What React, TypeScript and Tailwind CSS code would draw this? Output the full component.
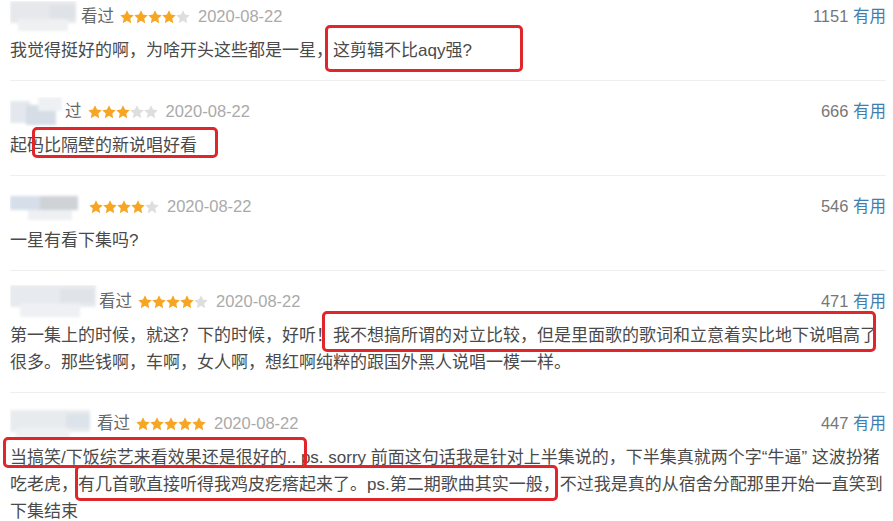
import React from "react";

type Block = [number, number, number, number, string];

type Review = {
  mask: { w: number; h: number; blocks: Block[] };
  watched?: string;
  stars: number;
  date: string;
  votes: string;
  text: string;
};

const reviews: Review[] = [
  {
    mask: {
      w: 70,
      h: 32,
      blocks: [
        [0, 0, 66, 22, "#e6e8eb"],
        [8, 18, 50, 12, "#eef0f2"],
        [40, 4, 26, 14, "#dfe2e6"],
      ],
    },
    watched: "看过",
    stars: 4,
    date: "2020-08-22",
    votes: "1151",
    text: "我觉得挺好的啊，为啥开头这些都是一星，这剪辑不比aqy强?",
  },
  {
    mask: {
      w: 54,
      h: 30,
      blocks: [
        [0, 4, 20, 22, "#e4e8ee"],
        [16, 8, 30, 20, "#d5dde6"],
        [28, 0, 24, 14, "#eef1f4"],
      ],
    },
    watched: "过",
    stars: 3,
    date: "2020-08-22",
    votes: "666",
    text: "起码比隔壁的新说唱好看",
  },
  {
    mask: {
      w: 73,
      h: 30,
      blocks: [
        [0, 4, 30, 14, "#d6dfe9"],
        [30, 4, 38, 14, "#cfd2d6"],
        [18, 18, 44, 10, "#eef0f3"],
      ],
    },
    stars: 4,
    date: "2020-08-22",
    votes: "546",
    text: "一星有看下集吗?",
  },
  {
    mask: {
      w: 88,
      h: 34,
      blocks: [
        [0, 0, 86, 22, "#e7eaee"],
        [10, 18, 60, 14, "#eef0f3"],
        [50, 4, 34, 14, "#e0e4e9"],
      ],
    },
    watched: "看过",
    stars: 4,
    date: "2020-08-22",
    votes: "471",
    text: "第一集上的时候，就这？下的时候，好听！我不想搞所谓的对立比较，但是里面歌的歌词和立意着实比地下说唱高了很多。那些钱啊，车啊，女人啊，想红啊纯粹的跟国外黑人说唱一模一样。",
  },
  {
    mask: {
      w: 86,
      h: 32,
      blocks: [
        [0, 2, 80, 22, "#e8ebee"],
        [6, 20, 54, 10, "#eff1f3"],
        [56, 6, 24, 14, "#dde3ea"],
      ],
    },
    watched: "看过",
    stars: 5,
    date: "2020-08-22",
    votes: "447",
    text: "当搞笑/下饭综艺来看效果还是很好的.. ps. sorry 前面这句话我是针对上半集说的，下半集真就两个字“牛逼” 这波扮猪吃老虎，有几首歌直接听得我鸡皮疙瘩起来了。ps.第二期歌曲其实一般，不过我是真的从宿舍分配那里开始一直笑到下集结束",
  },
];

const marks = [
  { left: 325, top: 25, w: 198, h: 47 },
  { left: 32, top: 127, w: 186, h: 31 },
  { left: 322, top: 311, w: 554, h: 41 },
  { left: 3, top: 437, w: 304, h: 31 },
  { left: 75, top: 465, w: 483, h: 36 },
];

function Mask({ w, h, blocks }: Review["mask"]) {
  return (
    <svg width={w} height={h} className="shrink-0 -my-[3px]" viewBox={`0 0 ${w} ${h}`}>
      <defs>
        <filter id={`m${w}`} x="-10%" y="-10%" width="120%" height="120%">
          <feGaussianBlur stdDeviation="1.6" />
        </filter>
      </defs>
      <g filter={`url(#m${w})`}>
        {blocks.map(([x, y, bw, bh, c], i) => (
          <rect key={i} x={x} y={y} width={bw} height={bh} fill={c} />
        ))}
      </g>
    </svg>
  );
}

function Star({ on }: { on: boolean }) {
  return (
    <svg width="14" height="14" viewBox="0 0 24 24">
      <path
        d="M12 0.5l3.5 7.4 8 1-5.9 5.6 1.6 8L12 18.6l-7.2 3.9 1.6-8L0.5 8.9l8-1z"
        fill={on ? "#f6a623" : "#dedede"}
      />
    </svg>
  );
}

function Item({ r, first }: { r: Review; first: boolean }) {
  return (
    <div className={`${first ? "pt-[2px]" : "pt-[16px]"} pb-[16px] border-b border-[#efefef]`}>
      <div className="flex items-center h-[27px] text-[16.5px] relative top-[1px]">
        <Mask {...r.mask} />
        {r.watched && <span className="text-[#666] ml-[1px]">{r.watched}</span>}
        <span className="flex ml-[6px]">
          {[0, 1, 2, 3, 4].map((i) => (
            <Star key={i} on={i < r.stars} />
          ))}
        </span>
        <span className="ml-[8px] text-[#aaa]">{r.date}</span>
        <span className="ml-auto text-[#777]">
          {r.votes} <span className="text-[#3f7fae]">有用</span>
        </span>
      </div>
      <p className="mt-[8px] text-[17px] leading-[27px] text-[#4a4a4a]">{r.text}</p>
    </div>
  );
}

export default function App() {
  return (
    <div
      className="relative w-[893px] h-[521px] overflow-hidden bg-white pl-[10px] pr-[7px]"
      style={{ fontFamily: '"Liberation Sans", "Noto Sans CJK SC", sans-serif' }}
    >
      {reviews.map((r, i) => (
        <Item key={i} r={r} first={i === 0} />
      ))}
      {marks.map((m, i) => (
        <div
          key={i}
          className="absolute border-[3px] border-[#e0262b] rounded-[5px]"
          style={{ left: m.left, top: m.top, width: m.w, height: m.h }}
        />
      ))}
    </div>
  );
}
